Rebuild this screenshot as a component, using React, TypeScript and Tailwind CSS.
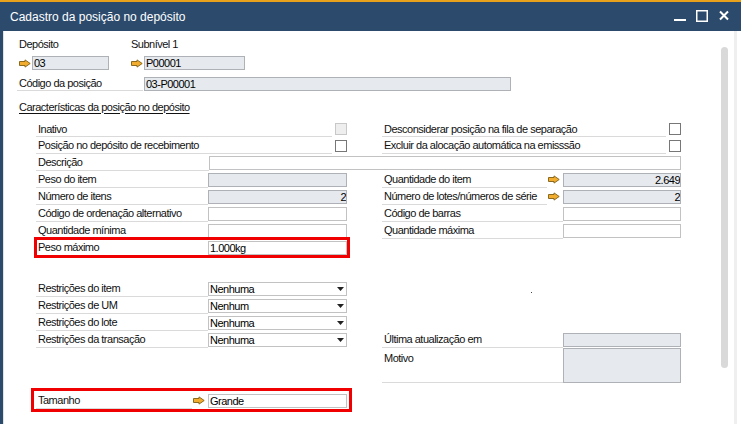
import React from 'react';

type FieldProps = {
  className?: string;
  gray?: boolean;
  value?: string;
  right?: boolean;
};

const Field = ({ className = '', gray = false, value = '', right = false }: FieldProps) => (
  <div
    className={`h-[14px] shrink-0 self-center overflow-hidden whitespace-nowrap border pl-[1px] leading-[12px] text-black ${
      gray ? 'border-[#aeb2b6] bg-[#e6eaee]' : 'border-[#c2c2c2] bg-white'
    } ${right ? 'pr-0 text-right' : 'pr-[1px]'} ${className}`}
  >
    {value}
  </div>
);

const Combo = ({ value }: { value: string }) => (
  <div className="flex h-[14px] w-[139px] shrink-0 items-center self-center border border-[#c2c2c2] bg-white pl-[1px] pr-[2px] leading-[12px] text-black">
    <span className="flex-1">{value}</span>
    <svg width="7" height="4" viewBox="0 0 7 4">
      <path d="M0 0H7L3.5 4Z" fill="#222" />
    </svg>
  </div>
);

const Label = ({ children, className = '' }: { children?: React.ReactNode; className?: string }) => (
  <div className={`flex shrink-0 items-center whitespace-nowrap border-b border-[#dadada] pl-[2px] ${className}`}>
    {children}
  </div>
);

const Check = ({ disabled = false }: { disabled?: boolean }) => (
  <div
    className={`h-[12px] w-[12px] shrink-0 self-center border ${
      disabled ? 'border-[#c8c8c8] bg-[#eeeeee]' : 'border-[#777777] bg-white'
    }`}
  />
);

const LinkArrow = ({ className = '' }: { className?: string }) => (
  <svg width="12" height="9" viewBox="0 0 12 9" className={`shrink-0 self-center ${className}`}>
    <path
      d="M0.5 2.5H6V0.9L11.2 4.5L6 8.1V6.5H0.5Z"
      fill="#f2ad2e"
      stroke="#8a6a1e"
      strokeWidth="1"
    />
  </svg>
);

const RedBox = ({ className = '' }: { className?: string }) => (
  <span className={`pointer-events-none absolute border-[3px] border-[#f00000] ${className}`} />
);

export default function App() {
  return (
    <div className="h-[424px] w-[741px] overflow-hidden bg-white font-['Liberation_Sans',Arial,sans-serif] text-[11px] tracking-[-0.5px] text-[#111]">
      <div className="h-[2px] bg-[#e9a01b]" />
      {/* title bar */}
      <div className="flex h-[29px] items-center bg-[#2c4b6c] text-white">
        <span className="pl-[10px] text-[12px] tracking-normal">Cadastro da posição no depósito</span>
        <div className="ml-auto mr-[12px] flex self-start pt-[8px]">
          <svg width="12" height="12" viewBox="0 0 12 12">
            <rect x="0" y="9" width="12" height="2" fill="#fff" />
          </svg>
          <svg width="12" height="12" viewBox="0 0 12 12" className="ml-[10px]">
            <rect x="0.75" y="0.75" width="10.5" height="10.5" fill="none" stroke="#fff" strokeWidth="1.5" />
          </svg>
          <svg width="10" height="12" viewBox="0 0 10 12" className="ml-[11px]">
            <path d="M1 1.5L9 9.5M9 1.5L1 9.5" stroke="#fff" strokeWidth="2" />
          </svg>
        </div>
      </div>

      <div className="flex h-[393px]">
        <div className="w-[3px] bg-[#2c4b6c]" />
        <div className="w-[1px] bg-[#e2e2e2]" />

        {/* form */}
        <div className="w-[713px]">
          <div className="ml-[15px] mt-[6px] flex h-[14px] items-center">
            <span className="w-[112px]">Depósito</span>
            <span>Subnível 1</span>
          </div>
          <div className="ml-[15px] mt-[5px] flex h-[14px]">
            <LinkArrow />
            <Field gray value="03" className="ml-[1px] w-[77px]" />
            <LinkArrow className="ml-[22px]" />
            <Field gray value="P00001" className="ml-[1px] w-[101px]" />
          </div>
          <div className="ml-[13px] mt-[6px] flex h-[15px]">
            <Label className="w-[126px]">Código da posição</Label>
            <Field gray value="03-P00001" className="ml-[1px] w-[367px]" />
          </div>
          <div className="ml-[15px] mt-[9px] flex h-[14px] items-center">
            <span className="underline underline-offset-2">Características da posição no depósito</span>
          </div>

          {/* characteristics */}
          <div className="ml-[32px] mt-[7px]">
            <div className="flex h-[16px]">
              <div className="flex w-[311px]">
                <Label className="w-[296px] pt-[2px]">Inativo</Label>
                <div className="ml-[3px] flex">
                  <Check disabled />
                </div>
              </div>
              <div className="ml-[35px] flex w-[299px]">
                <Label className="w-[284px] pt-[2px]">Desconsiderar posição na fila de separação</Label>
                <div className="ml-[3px] flex">
                  <Check />
                </div>
              </div>
            </div>
            <div className="flex h-[17px]">
              <div className="flex w-[311px]">
                <Label className="w-[296px]">Posição no depósito de recebimento</Label>
                <div className="ml-[3px] flex">
                  <Check />
                </div>
              </div>
              <div className="ml-[35px] flex w-[299px]">
                <Label className="w-[284px]">Excluir da alocação automática na emisssão</Label>
                <div className="ml-[3px] flex">
                  <Check />
                </div>
              </div>
            </div>
            <div className="flex h-[17px]">
              <Label className="w-[173px]">Descrição</Label>
              <Field className="w-[472px]" />
            </div>
            <div className="flex h-[17px]">
              <div className="flex w-[311px]">
                <Label className="w-[172px]">Peso do item</Label>
                <Field gray className="w-[139px]" />
              </div>
              <div className="ml-[35px] flex w-[299px]">
                <Label className="w-[165px]">Quantidade do item</Label>
                <LinkArrow className="ml-[1px]" />
                <Field gray right value="2.649" className="ml-[3px] w-[118px]" />
              </div>
            </div>
            <div className="flex h-[17px]">
              <div className="flex w-[311px]">
                <Label className="w-[172px]">Número de itens</Label>
                <Field gray right value="2" className="w-[139px]" />
              </div>
              <div className="ml-[35px] flex w-[299px]">
                <Label className="w-[165px]">Número de lotes/números de série</Label>
                <LinkArrow className="ml-[1px]" />
                <Field gray right value="2" className="ml-[3px] w-[118px]" />
              </div>
            </div>
            <div className="flex h-[17px]">
              <div className="flex w-[311px]">
                <Label className="w-[172px]">Código de ordenação alternativo</Label>
                <Field className="w-[139px]" />
              </div>
              <div className="ml-[35px] flex w-[299px]">
                <Label className="w-[181px]">Código de barras</Label>
                <Field className="w-[118px]" />
              </div>
            </div>
            <div className="flex h-[17px]">
              <div className="flex w-[311px]">
                <Label className="w-[172px]">Quantidade mínima</Label>
                <Field className="w-[139px]" />
              </div>
              <div className="ml-[35px] flex w-[299px]">
                <Label className="w-[181px]">Quantidade máxima</Label>
                <Field className="w-[118px]" />
              </div>
            </div>
            <div className="relative flex h-[17px] w-[311px]">
              <Label className="w-[172px]">Peso máximo</Label>
              <Field value="1.000kg" className="w-[139px]" />
              <RedBox className="-bottom-[2px] -left-[2px] -right-[3px] -top-[2px]" />
            </div>

            {/* restrictions */}
            <div className="mt-[24px] flex">
              <div className="w-[311px]">
                <div className="flex h-[17px]">
                  <Label className="w-[172px]">Restrições do item</Label>
                  <Combo value="Nenhuma" />
                </div>
                <div className="flex h-[17px]">
                  <Label className="w-[172px]">Restrições de UM</Label>
                  <Combo value="Nenhum" />
                </div>
                <div className="flex h-[17px]">
                  <Label className="w-[172px]">Restrições do lote</Label>
                  <Combo value="Nenhuma" />
                </div>
                <div className="flex h-[17px]">
                  <Label className="w-[172px]">Restrições da transação</Label>
                  <Combo value="Nenhuma" />
                </div>
              </div>
              <div className="relative ml-[35px] w-[299px] pt-[51px]">
                <span className="absolute left-[149px] top-[12px] h-[1px] w-[1px] bg-[#444]" />
                <div className="flex h-[17px]">
                  <Label className="w-[181px]">Última atualização em</Label>
                  <Field gray className="w-[118px]" />
                </div>
                <div className="flex h-[35px]">
                  <Label className="w-[181px] items-start pt-[2px]">Motivo</Label>
                  <div className="h-[35px] w-[118px] border border-[#aeb2b6] bg-[#e6eaee]" />
                </div>
              </div>
            </div>

            <div className="relative mt-[9px] flex h-[17px] w-[311px]">
              <Label className="w-[156px]">Tamanho</Label>
              <LinkArrow className="ml-[1px]" />
              <Field value="Grande" className="ml-[3px] w-[139px]" />
              <RedBox className="-bottom-[3px] -left-[5px] -right-[5px] -top-[4px]" />
            </div>
          </div>
        </div>

        {/* scrollbar */}
        <div className="w-[17px] pt-[16px]">
          <div className="ml-[4px] h-[321px] w-[7px] rounded-full bg-[#d9d9d9]" />
        </div>
        <div className="w-[3px] bg-[#efefef]" />
        <div className="flex-1 bg-white" />
      </div>
    </div>
  );
}
